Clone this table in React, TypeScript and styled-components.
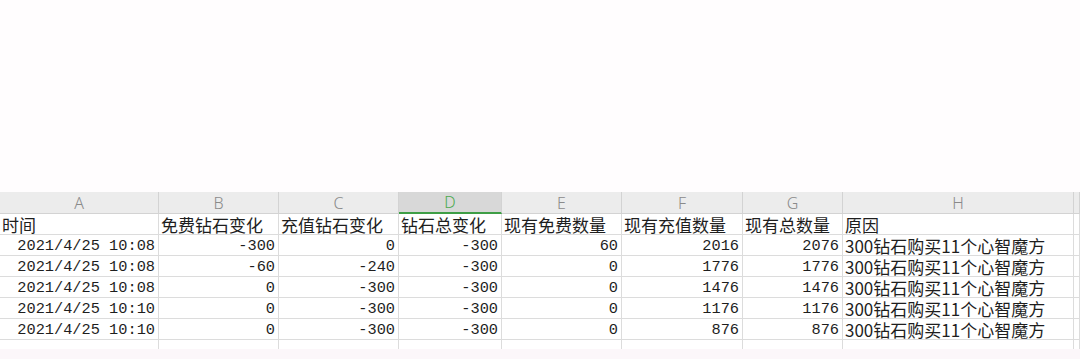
import React from "react";
import styled, { createGlobalStyle } from "styled-components";

const GlobalStyle = createGlobalStyle`
    html, body {
        margin: 0;
        padding: 0;
        background: #fffdfe;
    }
`;

type Row = {
    time: string;
    free: number;
    paid: number;
    total: number;
    nowFree: number;
    nowPaid: number;
    nowTotal: number;
    reason: string;
};

const letters = ["A", "B", "C", "D", "E", "F", "G", "H", ""];
const titles = [
    "时间",
    "免费钻石变化",
    "充值钻石变化",
    "钻石总变化",
    "现有免费数量",
    "现有充值数量",
    "现有总数量",
    "原因",
    "",
];

const reason = "300钻石购买11个心智魔方";
const rows: Row[] = [
    { time: "2021/4/25 10:08", free: -300, paid: 0, total: -300, nowFree: 60, nowPaid: 2016, nowTotal: 2076, reason },
    { time: "2021/4/25 10:08", free: -60, paid: -240, total: -300, nowFree: 0, nowPaid: 1776, nowTotal: 1776, reason },
    { time: "2021/4/25 10:08", free: 0, paid: -300, total: -300, nowFree: 0, nowPaid: 1476, nowTotal: 1476, reason },
    { time: "2021/4/25 10:10", free: 0, paid: -300, total: -300, nowFree: 0, nowPaid: 1176, nowTotal: 1176, reason },
    { time: "2021/4/25 10:10", free: 0, paid: -300, total: -300, nowFree: 0, nowPaid: 876, nowTotal: 876, reason },
];

export default function App() {
    return (
        <Page>
            <GlobalStyle />
            <Blank />
            <Sheet>
                {letters.map((l, i) => (
                    <ColHead key={"h" + i} $active={l === "D"}>
                        {l}
                    </ColHead>
                ))}
                {titles.map((t, i) => (
                    <TextCell key={"t" + i}>{t}</TextCell>
                ))}
                {rows.map((r, i) => (
                    <React.Fragment key={i}>
                        <NumCell>{r.time}</NumCell>
                        <NumCell>{r.free}</NumCell>
                        <NumCell>{r.paid}</NumCell>
                        <NumCell>{r.total}</NumCell>
                        <NumCell>{r.nowFree}</NumCell>
                        <NumCell>{r.nowPaid}</NumCell>
                        <NumCell>{r.nowTotal}</NumCell>
                        <TextCell>{r.reason}</TextCell>
                        <TextCell />
                    </React.Fragment>
                ))}
                {letters.map((_, i) => (
                    <StubCell key={"s" + i} />
                ))}
            </Sheet>
            <Footer />
        </Page>
    );
}

const Page = styled.div`
    width: 1080px;
    height: 359px;
    display: flex;
    flex-direction: column;
    overflow: hidden;
`;

const Blank = styled.div`
    height: 192px;
    background: #fffdfe;
`;

const Sheet = styled.div`
    display: grid;
    grid-template-columns: 159px 120px 120px 103px 120px 121px 100px 231px 1fr;
    grid-template-rows: 22px repeat(6, 21px) 9px;
    background: #ffffff;
`;

const ColHead = styled.div<{ $active?: boolean }>`
    box-sizing: border-box;
    display: flex;
    align-items: center;
    justify-content: center;
    background: ${(p) => (p.$active ? "#d8d8d8" : "#ececec")};
    color: ${(p) => (p.$active ? "#4caa50" : "#8a8a8a")};
    border-right: 1px solid #d3d3d3;
    border-bottom: ${(p) => (p.$active ? "2px solid #3e9e46" : "1px solid #d3d3d3")};
    font-family: "Noto Sans", "Liberation Sans", sans-serif;
    font-size: 16px;
    font-weight: 300;
`;

const Cell = styled.div`
    box-sizing: border-box;
    display: flex;
    align-items: center;
    border-right: 1px solid #dcdcdc;
    border-bottom: 1px solid #dcdcdc;
    color: #1e1e1e;
    white-space: nowrap;
    min-width: 0;
`;

const TextCell = styled(Cell)`
    padding-left: 2px;
    padding-top: 1px;
    font-family: "Noto Sans CJK SC", "Noto Sans", sans-serif;
    font-size: 17px;
    line-height: 18px;
`;

const NumCell = styled(Cell)`
    justify-content: flex-end;
    padding-right: 3px;
    padding-top: 2px;
    font-family: "Liberation Mono", "DejaVu Sans Mono", monospace;
    font-size: 15.3px;
    line-height: 17px;
`;

const StubCell = styled.div`
    box-sizing: border-box;
    border-right: 1px solid #dcdcdc;
`;

const Footer = styled.div`
    flex: 1;
    background: #fcf7fa;
`;
